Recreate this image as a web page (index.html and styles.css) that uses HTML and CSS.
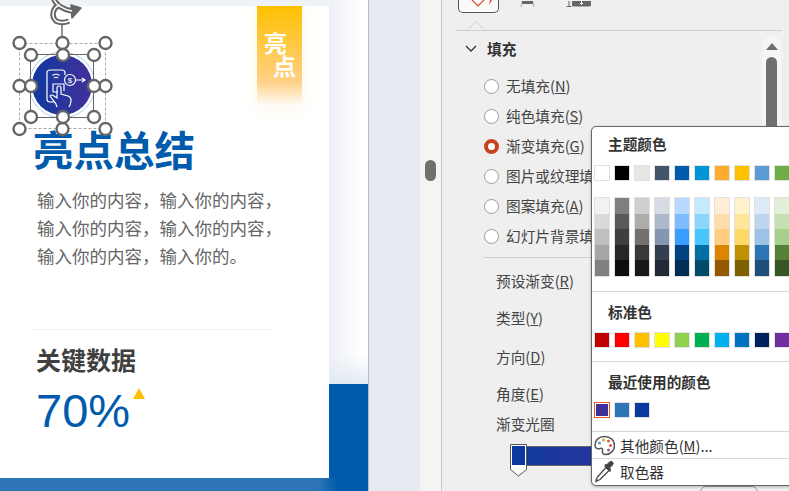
FILE: index.html
```html
<!DOCTYPE html>
<html lang="zh-CN">

<head>
    <title>设置形状格式</title>
    <link rel="stylesheet" href="styles.css">
</head>

<body>
    <div class="slide">
        <div class="slide_top"></div>
        <div class="card">
            <div class="ribbon"><span>亮</span><span class="ribbon_b">点</span></div>
            <h1 class="card_h1">亮点总结</h1>
            <p class="card_p">输入你的内容，输入你的内容，<br>输入你的内容，输入你的内容，<br>输入你的内容，输入你的。</p>
            <div class="card_line"></div>
            <h2 class="card_h2">关键数据</h2>
            <div class="stat">70%<i class="stat_up"></i></div>
        </div>
        <div class="slide_bottom"></div>

        <svg class="selection" width="130" height="140" viewBox="0 0 130 140">
            <defs>
                <linearGradient id="round">
                    <stop offset="0" stop-color="#0f3aa0" />
                    <stop offset="1" stop-color="#43309a" />
                </linearGradient>
            </defs>
            <circle cx="62" cy="85" r="33" fill="#fff" stroke="#a9cfee" />
            <circle cx="62" cy="85" r="30" fill="url(#round)" />
            <g fill="none" stroke="#fff" stroke-width="1.2">
                <path d="M65 75V73a3 3 0 0 0-3-3H50A3 3 0 0 0 47 73V99a3 3 0 0 0 3 3H55" />
                <path d="M52.500 75.500q3.500-2.500 7 0M54 78q2-1.500 4 0" />
                <circle cx="70" cy="80" r="5.500" />
                <path d="M75.500 80H84M82 78l3 2-3 2" />
                <path d="M58 92H53V84h11v7" />
                <path d="M57 107q-1-4-4-7l-3-4q1-2 4 0l3 2V88q0-2 2-2t2 2v6l7 2q3 1 3 4 0 4-2 7" />
            </g>
            <text class="selection_s" x="70" y="83" text-anchor="middle">$</text>

            <path d="M62 22V43" stroke="#666" stroke-width="1.4" />
            <g fill="none" stroke="#666" stroke-width="5.500">
                <path d="M60 5a9.500 9.500 0 0 0-4 16q6 3 13 0" />
                <path d="M53 -3q3 11 19 14" />
            </g>
            <path d="M71 5L81 8 72 18z" fill="#666" stroke="#666" stroke-width="1.500" stroke-linejoin="round" />
            <g fill="none" stroke="#fff" stroke-width="1.500">
                <path d="M60 5a9.500 9.500 0 0 0-4 16q6 3 13 0" />
                <path d="M53 -3q3 11 19 14" />
            </g>

            <rect class="sel_dash" x="19.500" y="43.500" width="86" height="85" />
            <rect class="sel_box" x="30.500" y="54.500" width="63" height="63" />

            <g class="sel_dots">
                <circle cx="19.500" cy="43" r="6" /><circle cx="62.500" cy="43" r="6" /><circle cx="105.500" cy="43" r="6" />
                <circle cx="19.500" cy="86" r="6" /><circle cx="105.500" cy="86" r="6" />
                <circle cx="19.500" cy="129" r="6" /><circle cx="62.500" cy="129" r="6" /><circle cx="105.500" cy="129" r="6" />
                <circle cx="31" cy="55" r="6" /><circle cx="63" cy="55" r="6" /><circle cx="94" cy="55" r="6" />
                <circle cx="31" cy="86" r="6" /><circle cx="94" cy="86" r="6" />
                <circle cx="31" cy="117" r="6" /><circle cx="63" cy="117" r="6" /><circle cx="94" cy="117" r="6" />
            </g>
        </svg>
    </div>

    <div class="gutter"></div>
    <div class="bar"><div class="bar_thumb"></div></div>

    <div class="pane">
        <div class="tabs">
            <div class="tab tab_on">
                <svg width="24" height="12" viewBox="0 0 24 12">
                    <path d="M1 0l6 6 6-6" fill="none" stroke="#e0452b" stroke-width="1.200" />
                    <path d="M18 5l1-5h2z" fill="#e0452b" />
                </svg>
            </div>
            <div class="tab">
                <svg width="20" height="12" viewBox="0 0 20 12">
                    <path d="M3 6L4.500 0M16 6L14.500 0" fill="none" stroke="#bbb" stroke-width="1.200" />
                    <path d="M4 0h11v3H4z" fill="#666" />
                </svg>
            </div>
            <div class="tab">
                <svg width="32" height="12" viewBox="0 0 32 12">
                    <path d="M5 0v5M2.500 5.500h5" fill="none" stroke="#666" stroke-width="1" />
                    <rect x="8" y="-4" width="19" height="9.500" rx="1.500" fill="#666" />
                    <path d="M17.500 0v3M16 2l1.500 1.500L19 2" fill="none" stroke="#fff" stroke-width="1" />
                </svg>
            </div>
        </div>
        <div class="tabs_line"><i class="tabs_notch"></i></div>

        <div class="group">
            <svg width="12" height="7" viewBox="0 0 12 7"><path d="M1 1l5 5 5-5" fill="none" stroke="#333" stroke-width="1.3" /></svg>
            <h3 class="group_h3">填充</h3>
        </div>

        <div class="radios">
            <div class="radio"><i class="radio_c"></i>无填充(<u>N</u>)</div>
            <div class="radio"><i class="radio_c"></i>纯色填充(<u>S</u>)</div>
            <div class="radio"><i class="radio_c radio_on"></i>渐变填充(<u>G</u>)</div>
            <div class="radio"><i class="radio_c"></i>图片或纹理填充(<u>P</u>)</div>
            <div class="radio"><i class="radio_c"></i>图案填充(<u>A</u>)</div>
            <div class="radio"><i class="radio_c"></i>幻灯片背景填充(<u>B</u>)</div>
        </div>
        <div class="radios_line"></div>

        <div class="field field_a">预设渐变(<u>R</u>)</div>
        <div class="field field_b">类型(<u>Y</u>)</div>
        <div class="field field_c">方向(<u>D</u>)</div>
        <div class="field field_d">角度(<u>E</u>)</div>
        <div class="field field_e">渐变光圈</div>

        <div class="stops">
            <div class="stops_bar"></div>
            <svg class="stops_pin" width="17" height="33" viewBox="0 0 17 33">
                <path d="M.5.5h16v25l-8 6.500-8-6.500z" fill="#fff" stroke="#555" />
                <rect x="2" y="2" width="13" height="19" fill="#0a3aa0" />
            </svg>
        </div>

        <div class="scroll">
            <div class="scroll_up"></div>
            <div class="scroll_thumb"></div>
        </div>
        <div class="pane_btn"></div>
    </div>

    <div class="menu">
        <div class="menu_h">主题颜色</div>
        <div class="swatches swatches_theme" id="theme"></div>
        <div class="shades" id="shades"></div>
        <div class="menu_line menu_line_a"></div>
        <div class="menu_h menu_h_std">标准色</div>
        <div class="swatches swatches_std" id="std"></div>
        <div class="menu_line menu_line_b"></div>
        <div class="menu_h menu_h_std">最近使用的颜色</div>
        <div class="swatches swatches_recent" id="recent"></div>
        <div class="menu_line menu_line_c"></div>
        <div class="menu_item">
            <svg width="21" height="21" viewBox="0 0 21 21">
                <path d="M10.500 1.500C5 1.500 1 5 1 10c0 4 3 4 5 3.500 2-.5 3 .5 2.500 2-.5 2 .5 4 3 4 5 0 9-4 9-9 0-5.500-4.500-9-10-9z" fill="#fff" stroke="#555" stroke-width="1.500" />
                <circle cx="5.500" cy="8" r="1.500" fill="#3f9fd8" />
                <circle cx="9.500" cy="5" r="1.500" fill="#e8a33d" />
                <circle cx="14.500" cy="6" r="1.500" fill="#e2574c" />
                <circle cx="16.500" cy="10.500" r="1.500" fill="#d9534f" />
                <circle cx="14.500" cy="15" r="1.500" fill="#9b59b6" />
            </svg>
            <span>其他颜色(<u>M</u>)...</span>
        </div>
        <div class="menu_line"></div>
        <div class="menu_item menu_item_b">
            <svg width="21" height="22" viewBox="0 0 21 22">
                <path d="M12 6.500l3 3L6 18.500l-3 1.500-1-1 1.500-3z" fill="#fff" stroke="#444" stroke-width="1.200" stroke-linejoin="round" />
                <path d="M1.500 21l2-2.500" stroke="#444" stroke-width="1.500" />
                <path d="M11 5.500l5 5 .5-2.500-1-1 3-3a2 2 0 0 0-3-3l-3 3-1-1z" fill="#444" stroke="#444" stroke-linejoin="round" />
            </svg>
            <span>取色器</span>
        </div>
    </div>

    <script src="script.js"></script>
</body>

</html>
```

FILE: styles.css
```css
* {
    margin: 0;
    padding: 0;
    box-sizing: border-box;
}

body {
    display: flex;
    width: 789px;
    height: 491px;
    overflow: hidden;
    position: relative;
    background-color: #efefef;
    color: #444;
    font-family: "Noto Sans CJK SC", "Liberation Sans", sans-serif;
    font-size: 14.670px;
}

/* slide */
.slide {
    width: 369px;
    flex: none;
    position: relative;
    border-right: 1px solid #bdbdbd;
    background:
        linear-gradient(#005bac, #005bac) 0 384px / 100% 107px no-repeat,
        linear-gradient(180deg, rgba(255, 255, 255, 0) 355px, #e3eaf3 384px),
        linear-gradient(90deg, #edf0f6 329px, #fff 362px);
}

.slide_top {
    height: 6px;
    width: 329px;
    background-color: #f0f3f6;
}

.card {
    width: 329px;
    height: 472px;
    background-color: white;
    position: relative;
    padding-left: 37px;
    overflow: hidden;
}

.slide_bottom {
    height: 13px;
    background: linear-gradient(90deg, #2e75b6 318px, #005bac 338px);
}

.ribbon {
    position: absolute;
    top: 0;
    left: 257px;
    width: 45px;
    height: 101px;
    padding: 25px 0 0 7px;
    background: linear-gradient(180deg, #ffc000, #ffd186 75%, #fff);
    box-shadow: 0 0 14px rgba(255, 200, 100, 0.18);
    color: white;
    font-size: 23px;
    font-weight: 700;
    line-height: 23px;
}

.ribbon span {
    display: block;
}

.ribbon_b {
    margin-left: 9px;
}

.card_h1 {
    margin: 118px 0 0 -4px;
    height: 50px;
    color: #005bac;
    font-size: 40.500px;
    font-weight: 700;
    line-height: 50px;
}

.card_p {
    margin-top: 12px;
    color: #666;
    font-size: 17.500px;
    line-height: 28px;
    white-space: nowrap;
}

.card_line {
    width: 242px;
    height: 1px;
    margin: 59px 0 0 -7px;
    background-color: #edf1f6;
}

.card_h2 {
    margin-top: 13px;
    margin-left: -1px;
    color: #404040;
    font-size: 25px;
    font-weight: 700;
    line-height: 32px;
}

.stat {
    display: flex;
    margin-top: 10px;
    margin-left: -1px;
    color: #005bac;
    font-family: "Liberation Sans", sans-serif;
    font-size: 47px;
    line-height: 52px;
}

.stat_up {
    width: 0;
    height: 0;
    margin: 3px 0 0 3px;
    border-left: 6.500px solid transparent;
    border-right: 6.500px solid transparent;
    border-bottom: 11px solid #ffc000;
}

.selection {
    position: absolute;
    top: 0;
    left: 0;
    overflow: visible;
}

.selection_s {
    fill: #fff;
    font-family: "Liberation Sans", sans-serif;
    font-size: 8px;
}

.sel_dash {
    fill: none;
    stroke: #aaa;
    stroke-dasharray: 3 2;
}

.sel_box {
    fill: none;
    stroke: #666;
}

.sel_dots circle {
    fill: white;
    stroke: #666;
    stroke-width: 2.400;
}

/* strip between slide and pane */
.gutter {
    width: 51px;
    flex: none;
    background-color: #e7eaf0;
}

.bar {
    width: 22px;
    flex: none;
    padding: 160px 0 0 5px;
    border-right: 1px solid #c8c8c8;
    background-color: #f4f4f4;
}

.bar_thumb {
    width: 11px;
    height: 21px;
    border-radius: 6px;
    background-color: #6f6f6f;
}

/* format pane */
.pane {
    flex: 1;
    position: relative;
    padding-left: 14px;
}

.tabs {
    display: flex;
    height: 13px;
    align-items: flex-end;
    padding-left: 2px;
}

.tab {
    display: flex;
    height: 12px;
    justify-content: flex-start;
}

.tab_on {
    width: 41px;
    height: 13px;
    margin-right: 19px;
    padding-left: 12px;
    border: 1px solid #555;
    border-top: none;
    border-radius: 0 0 5px 5px;
    background-color: #fafafa;
}

.tab + .tab {
    width: 46px;
}

.tabs_line {
    position: relative;
    width: 326px;
    height: 1px;
    margin-top: 17px;
    background-color: #cfcfcf;
}

.tabs_notch {
    position: absolute;
    left: 14px;
    top: -7px;
    width: 12px;
    height: 12px;
    transform: rotate(45deg);
    background-color: #efefef;
    border-left: 1px solid #cfcfcf;
    border-top: 1px solid #cfcfcf;
    clip-path: polygon(0 0, 100% 0, 0 100%);
}

.group {
    display: flex;
    align-items: center;
    height: 34px;
    padding-left: 9px;
}

.group_h3 {
    margin-left: 10px;
    color: #333;
    font-size: 14.670px;
    font-weight: 700;
}

.radios {
    margin: 6px 0 0 28px;
}

.radio {
    display: flex;
    align-items: center;
    height: 30px;
    padding-bottom: 2px;
    white-space: nowrap;
}

.radio_c {
    width: 15px;
    height: 15px;
    margin: 2px 7px 0 0;
    border: 1px solid #9a9a9a;
    border-radius: 50%;
    background-color: white;
}

.radio_on {
    border: 4px solid #c8421f;
}

.radios_line {
    width: 120px;
    height: 1px;
    margin: 6px 0 0 28px;
    background-color: #cfcfcf;
}

.field {
    display: flex;
    align-items: center;
    height: 22px;
    padding-left: 40px;
    white-space: nowrap;
}

.field_a {
    height: 46px;
    margin-top: -1px;
}

.field_b {
    margin-top: 3px;
}

.field_c {
    margin-top: 17px;
}

.field_d {
    margin-top: 15px;
}

.field_e {
    margin-top: 8px;
}

.stops {
    position: relative;
    height: 22px;
    margin: 12px 0 0 54px;
}

.stops_bar {
    height: 20px;
    width: 200px;
    border: 1px solid #666;
    background: linear-gradient(90deg, #0f3aa0, #43309a);
}

.stops_pin {
    position: absolute;
    top: -2px;
    left: 0;
}

.scroll {
    position: absolute;
    top: 36px;
    left: 320px;
    width: 20px;
    height: 120px;
    padding: 7px 0 0 4px;
    border-radius: 10px 10px 0 0;
    background-color: #f5f5f5;
}

.scroll_up {
    width: 0;
    height: 0;
    margin-bottom: 7px;
    border-left: 6px solid transparent;
    border-right: 6px solid transparent;
    border-bottom: 7px solid #6f6f6f;
}

.scroll_thumb {
    width: 11px;
    height: 80px;
    border-radius: 6px;
    background-color: #6f6f6f;
}

.pane_btn {
    position: absolute;
    top: 486px;
    left: 258px;
    width: 58px;
    height: 14px;
    border: 1px solid #999;
    border-radius: 6px;
}

/* colour menu */
.menu {
    position: absolute;
    top: 126px;
    left: 591px;
    width: 210px;
    height: 360px;
    padding-left: 2px;
    border: 1px solid #666;
    border-radius: 5px;
    background-color: white;
    box-shadow: 0 1px 3px rgba(0, 0, 0, 0.25);
    color: #333;
}

.menu_h {
    height: 38px;
    padding: 7px 0 0 14px;
    font-weight: 700;
    line-height: 20px;
}

.menu_h_std {
    height: 40px;
    padding-top: 10px;
}

.swatches {
    display: flex;
    gap: 4px;
    height: 16px;
}

.swatch {
    width: 16px;
    height: 16px;
    flex: none;
    border: 1px solid #e1e1e1;
}

.swatch_on {
    border: 1px solid #f0541e;
    outline: 1px solid #fff;
    outline-offset: -2px;
}

.shades {
    display: flex;
    gap: 4px;
    margin-top: 16px;
}

.shade {
    width: 16px;
    height: 80px;
    flex: none;
    display: flex;
    flex-direction: column;
    border: 1px solid #e1e1e1;
}

.shade i {
    flex: 1;
}

.menu_line {
    height: 1px;
    margin-left: -2px;
    background-color: #d6d6d6;
}

.menu_line_a {
    margin-top: 14px;
}

.menu_line_b,
.menu_line_c {
    margin-top: 13px;
}

.menu_item {
    display: flex;
    align-items: center;
    height: 26px;
    gap: 5px;
}

.menu_item_b span {
    margin-bottom: 2px;
}
```

FILE: script.js
```js
const theme = ['#ffffff', '#000000', '#e7e6e6', '#44546a', '#005bac', '#0095d9', '#ffab2e', '#ffc000', '#5b9bd5', '#70ad47']
const shades = [
    ['#f2f2f2', '#d9d9d9', '#bfbfbf', '#a6a6a6', '#808080'],
    ['#7f7f7f', '#595959', '#3f3f3f', '#262626', '#0d0d0d'],
    ['#d0cece', '#aeabab', '#757070', '#3a3838', '#171717'],
    ['#d6dce4', '#adb9ca', '#8496b0', '#333f4f', '#222a35'],
    ['#b7d9ff', '#7cbcff', '#389eff', '#004380', '#002d55'],
    ['#c4eaff', '#8bd6ff', '#47c6ff', '#006fa3', '#004a6c'],
    ['#ffeed5', '#ffddaa', '#ffcd80', '#dd8500', '#935800'],
    ['#fff2cc', '#ffe699', '#ffd966', '#bf9000', '#7f6000'],
    ['#deeaf6', '#bdd6ee', '#9cc2e5', '#2e75b5', '#1f4e79'],
    ['#e2efd9', '#c5e0b3', '#a8d08d', '#538135', '#375623']
]
const std = ['#c00000', '#ff0000', '#ffc000', '#ffff00', '#92d050', '#00b050', '#00b0f0', '#0070c0', '#002060', '#7030a0']
const recent = ['#3f2f99', '#2e75b6', '#0a3aa0']

const fill = (id, colors) => {
    const box = document.getElementById(id)
    colors.forEach(c => {
        const d = document.createElement('div')
        d.className = 'swatch'
        d.style.background = c
        box.appendChild(d)
    })
}

fill('theme', theme)
fill('std', std)
fill('recent', recent)
document.getElementById('recent').firstChild.classList.add('swatch_on')

const shadeBox = document.getElementById('shades')
shades.forEach(col => {
    const d = document.createElement('div')
    d.className = 'shade'
    col.forEach(c => {
        const i = document.createElement('i')
        i.style.background = c
        d.appendChild(i)
    })
    shadeBox.appendChild(d)
})
```
